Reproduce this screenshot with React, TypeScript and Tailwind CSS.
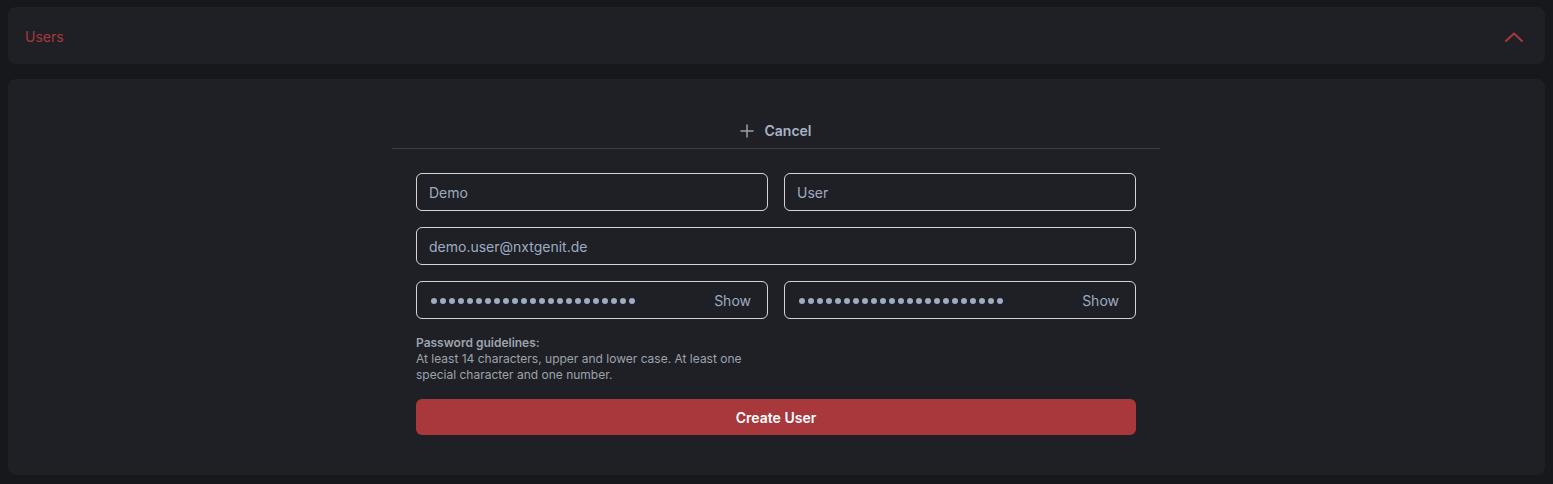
import { useState } from "react";

function PasswordField({ value }: { value: string }) {
  const [show, setShow] = useState(false);
  return (
    <div className="flex h-[38px] items-center rounded-md border border-[#d4d4d8] px-[13px] pt-px">
      <div className="flex min-w-0 flex-1 items-center">
        {show ? (
          <span className="text-sm text-[#9eacc2]">{value}</span>
        ) : (
          <div className="flex gap-[3px] pl-px">
            {value.split("").map((_, i) => (
              <span key={i} className="size-[6px] rounded-full bg-[#9eacc2]" />
            ))}
          </div>
        )}
      </div>
      <button
        type="button"
        onClick={() => setShow(!show)}
        className="ml-2 pr-[3px] text-sm text-[#9eacc2]"
      >
        Show
      </button>
    </div>
  );
}

function TextField({ value, className }: { value: string; className?: string }) {
  return (
    <input
      defaultValue={value}
      className={
        "h-[38px] rounded-md border border-[#d4d4d8] bg-transparent px-[12px] pt-px text-sm text-[#9eacc2] outline-none " +
        (className ?? "")
      }
    />
  );
}

export default function App() {
  return (
    <div
      className="min-h-[484px] bg-[#17181c] px-2 pt-[7px] pb-[9px]"
      style={{ fontFamily: "Inter, 'Noto Sans', sans-serif" }}
    >
      {/* Section header */}
      <div className="flex h-[57px] items-center justify-between rounded-lg bg-[#1f2025] pt-[2px] pl-[17px] pr-[22px]">
        <span className="text-sm text-[#a8383c]">Users</span>
        <svg width="18" height="10" viewBox="0 0 18 10" fill="none">
          <polyline
            points="1,9 9,1.5 17,9"
            stroke="#a8383c"
            strokeWidth="2"
            strokeLinecap="round"
            strokeLinejoin="round"
          />
        </svg>
      </div>

      {/* Form card */}
      <div className="mt-[15px] flex justify-center rounded-lg bg-[#1f2025] pt-[42px] pr-px pb-[40px]">
        <div className="w-[768px]">
          <div className="flex justify-center border-b border-[#3b3d4b] pb-[7px]">
            <button type="button" className="flex h-5 items-center gap-[10px] text-sm font-semibold text-[#a9b3c5]">
              <svg width="14" height="14" viewBox="0 0 14 14" fill="none">
                <path d="M7 0.5v13M0.5 7h13" stroke="#9aa1ad" strokeWidth="1.5" />
              </svg>
              Cancel
            </button>
          </div>

          <div className="grid grid-cols-2 gap-x-4 gap-y-4 px-6 pt-6">
            <TextField value="Demo" />
            <TextField value="User" />
            <TextField value="demo.user@nxtgenit.de" className="col-span-2" />
            <PasswordField value="demodemodemodemodemodem" />
            <PasswordField value="demodemodemodemodemodem" />
            <div className="text-xs leading-4 text-[#9ca3af]">
              <div className="font-semibold">Password guidelines:</div>
              <div>
                At least 14 characters, upper and lower case. At least one special
                character and one number.
              </div>
            </div>
            <div />
            <button
              type="button"
              className="col-span-2 h-9 rounded-md bg-[#a8383c] pt-px text-sm font-semibold text-white"
            >
              Create User
            </button>
          </div>
        </div>
      </div>
    </div>
  );
}
